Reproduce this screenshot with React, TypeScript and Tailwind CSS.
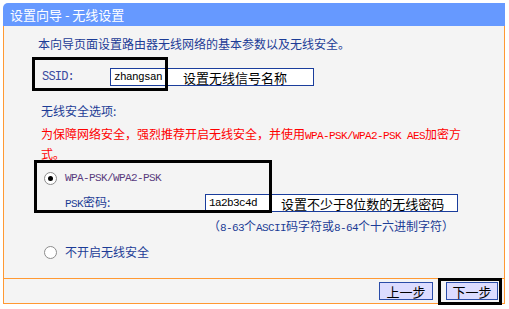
const cjk = "font-['Noto_Sans_CJK_SC','Liberation_Sans',sans-serif]";
const mono = "font-['Liberation_Mono','Noto_Sans_CJK_SC',monospace]";

function Radio({ checked }: { checked?: boolean }) {
  return (
    <span className="w-[13px] h-[13px] rounded-full border border-[#8c8c8c] bg-white flex items-center justify-center shrink-0">
      {checked && <span className="w-[5px] h-[5px] rounded-full bg-black" />}
    </span>
  );
}

function Asc({ children }: { children: React.ReactNode }) {
  return <span className={`${mono} text-[11px] tracking-[-0.6px]`}>{children}</span>;
}

export default function App() {
  return (
    <div className={`relative w-[509px] h-[309px] bg-white pt-[3px] pl-[3px] ${cjk}`}>
      {/* 标题栏 */}
      <div className="w-[502px] h-[23px] bg-[#6699ff] rounded-tl-[5px] flex items-center pl-[7px] text-white text-[13px] leading-none">
        设置向导 - 无线设置
      </div>

      <div className="w-[502px] h-[278px] bg-[#f4f4f4] border-x border-b border-[#ff9933] flex flex-col">
        <div className="h-[252px] text-[12px] leading-[16px] text-[#1c3c96]">
          <p className="mt-[10px] pl-[34px]">本向导页面设置路由器无线网络的基本参数以及无线安全。</p>

          {/* SSID */}
          <div className="mt-[16px] pl-[38px] flex items-center h-[18px]">
            <span className={`${mono} text-[12px] tracking-[-0.8px] w-[68px] text-[#3a4aa0]`}>SSID:</span>
            <div className="w-[204px] h-[18px] bg-white border border-[#1a3d9c] flex items-center">
              <span className={`${mono} text-[11px] tracking-[-0.6px] text-black pl-[3px] w-[72px]`}>zhangsan</span>
              <span className="text-[13px] text-black leading-none">设置无线信号名称</span>
            </div>
          </div>

          <p className="mt-[17px] pl-[37px]">无线安全选项:</p>
          <p className="mt-[6px] pl-[37px] leading-[17px] text-[#ff0000]">
            为保障网络安全，强烈推荐开启无线安全，并使用<Asc>WPA-PSK/WPA2-PSK AES</Asc>加密方
            <br />
            式。
          </p>

          {/* WPA */}
          <div className="mt-[8px] pl-[40px] flex items-center gap-[8px] h-[16px]">
            <Radio checked />
            <span className={`${mono} text-[11px] tracking-[-0.6px] text-[#5a3a7e]`}>WPA-PSK/WPA2-PSK</span>
          </div>
          <div className="mt-[8px] pl-[61px] flex items-center h-[18px]">
            <span className="w-[140px]">
              <Asc>PSK</Asc>密码:
            </span>
            <div className="w-[253px] h-[18px] bg-white border border-[#1a3d9c] flex items-center">
              <span className={`${mono} text-[11px] tracking-[-0.6px] text-black pl-[3px] w-[75px]`}>1a2b3c4d</span>
              <span className="text-[13px] text-black leading-none">设置不少于8位数的无线密码</span>
            </div>
          </div>
          <p className="mt-[6px] pl-[204px]">
            （<Asc>8-63</Asc>个<Asc>ASCII</Asc>码字符或<Asc>8-64</Asc>个十六进制字符）
          </p>

          <div className="mt-[8px] pl-[40px] flex items-center gap-[8px] h-[16px]">
            <Radio />
            <span>不开启无线安全</span>
          </div>
        </div>

        {/* 按钮栏 */}
        <div className="flex-1 border-t border-[#ff9933] flex items-center justify-end gap-[13px] pr-[6px]">
          <button className="w-[54px] h-[18px] bg-[#dcdcff] border border-[#2a4ca8] text-[13px] leading-none text-black">
            上一步
          </button>
          <button className="w-[52px] h-[18px] bg-[#dcdcff] border border-[#2a4ca8] text-[13px] leading-none text-black">
            下一步
          </button>
        </div>
      </div>

      {/* 标注框 */}
      <div className="absolute left-[32px] top-[57px] w-[136px] h-[34px] border-[3px] border-black pointer-events-none" />
      <div className="absolute left-[34px] top-[160px] w-[238px] h-[53px] border-[3px] border-black pointer-events-none" />
      <div className="absolute left-[438px] top-[278px] w-[64px] h-[27px] border-[3px] border-black pointer-events-none" />
    </div>
  );
}
